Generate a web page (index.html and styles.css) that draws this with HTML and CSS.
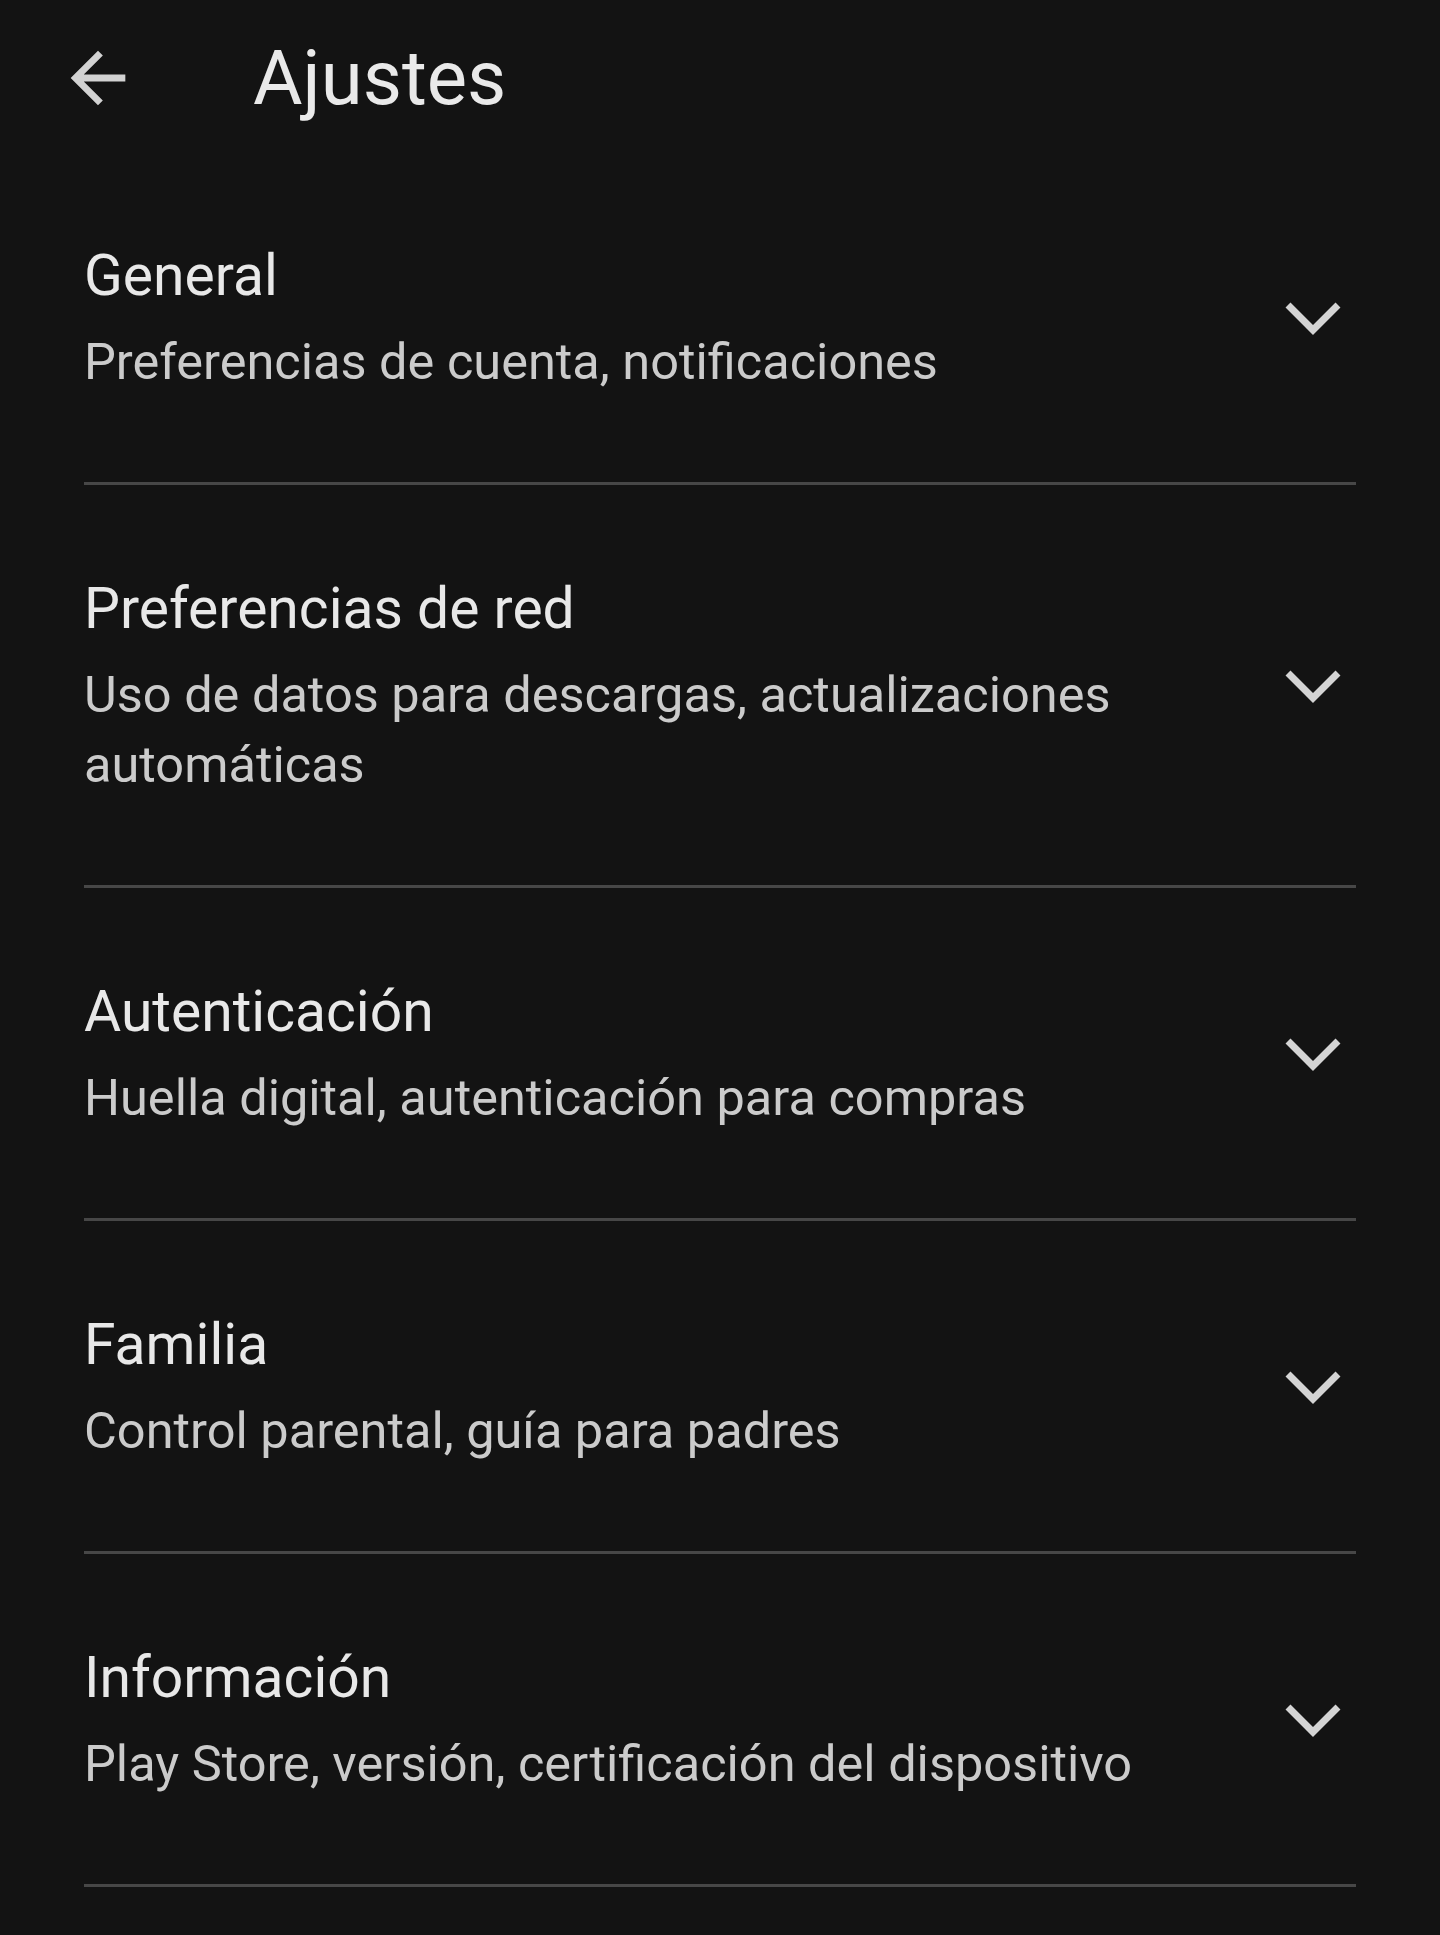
FILE: index.html
```html
<!DOCTYPE html>
<html lang="es">
<head>
    <title>Ajustes</title>
    <meta charset="UTF-8">
    <meta name="viewport" content="width=device-width, initial-scale=1.0">
    <link rel="stylesheet" href="styles.css">
</head>
<body>
    <header class="topbar">
        <a class="back" href="#" title="Atrás">
            <svg viewBox="0 0 24 24" width="82" height="82"><path d="M20 11H7.83l5.59-5.59L12 4l-8 8 8 8 1.41-1.41L7.83 13H20v-2z"/></svg>
        </a>
        <h1>Ajustes</h1>
    </header>

    <section class="settings">
        <div class="item">
            <div class="item-text">
                <div class="item-title">General</div>
                <div class="item-sub">Preferencias de cuenta, notificaciones</div>
            </div>
            <svg class="chev" viewBox="0 0 60 40"><polyline points="5,5 30,30 55,5"/></svg>
        </div>
        <div class="item">
            <div class="item-text">
                <div class="item-title">Preferencias de red</div>
                <div class="item-sub">Uso de datos para descargas, actualizaciones automáticas</div>
            </div>
            <svg class="chev" viewBox="0 0 60 40"><polyline points="5,5 30,30 55,5"/></svg>
        </div>
        <div class="item">
            <div class="item-text">
                <div class="item-title">Autenticación</div>
                <div class="item-sub">Huella digital, autenticación para compras</div>
            </div>
            <svg class="chev" viewBox="0 0 60 40"><polyline points="5,5 30,30 55,5"/></svg>
        </div>
        <div class="item">
            <div class="item-text">
                <div class="item-title">Familia</div>
                <div class="item-sub">Control parental, guía para padres</div>
            </div>
            <svg class="chev" viewBox="0 0 60 40"><polyline points="5,5 30,30 55,5"/></svg>
        </div>
        <div class="item">
            <div class="item-text">
                <div class="item-title">Información</div>
                <div class="item-sub">Play Store, versión, certificación del dispositivo</div>
            </div>
            <svg class="chev" viewBox="0 0 60 40"><polyline points="5,5 30,30 55,5"/></svg>
        </div>
    </section>
</body>
</html>
```

FILE: styles.css
```css
body {
    margin: 0;
    padding: 0;
    background-color: #131313;
    font-family: Roboto, "Open Sans", sans-serif;
    color: #e8e8e8;
}
.topbar {
    display: flex;
    align-items: center;
    height: 90px;
    padding: 33px 0 29px 57px;
}
.back {
    display: flex;
    width: 82px;
    height: 82px;
}
.back svg {
    fill: #d2d2d2;
}
.topbar h1 {
    margin: 0 0 0 114px;
    font-size: 76px;
    line-height: 90px;
    font-weight: 400;
    color: #e9e9e9;
}
.settings {
    padding: 0 84px;
}
.item {
    display: flex;
    align-items: center;
    padding: 90px 13px 85px 0;
    border-bottom: 3px solid #474747;
}
.item-text {
    flex: 1;
}
.item-title {
    font-size: 57px;
    line-height: 68px;
    color: #e8e8e8;
}
.item-sub {
    margin-top: 17px;
    font-size: 50.5px;
    line-height: 70px;
    color: #cbcbcb;
}
.chev {
    flex-shrink: 0;
    width: 60px;
    height: 40px;
    margin-left: 30px;
}
.chev polyline {
    fill: none;
    stroke: #d4d4d4;
    stroke-width: 7;
}
```
